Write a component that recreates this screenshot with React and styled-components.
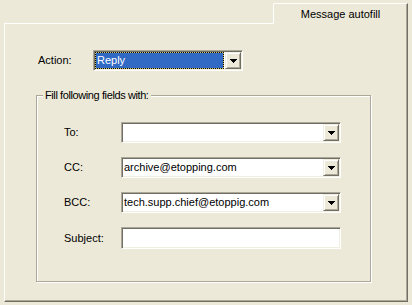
import React from "react";
import styled, { createGlobalStyle } from "styled-components";

const Global = createGlobalStyle`
  html, body { margin: 0; padding: 0; background: #ECE9D8; }
  body {
    font-family: "Liberation Sans", Arial, sans-serif;
    font-size: 11px;
    color: #000;
  }
`;

const Page = styled.div`
  width: 412px;
  height: 305px;
  box-sizing: border-box;
  padding: 3px 4px 3px 4px;
  display: flex;
  flex-direction: column;
  background: #ECE9D8;
`;

const TabRow = styled.div`
  display: flex;
  justify-content: flex-end;
  height: 20px;
`;

const Tab = styled.div`
  position: relative;
  z-index: 1;
  width: 135px;
  height: 21px;
  margin-bottom: -1px;
  box-sizing: border-box;
  background: #ECE9D8;
  border-top: 1px solid #fff;
  border-left: 1px solid #fff;
  border-right: 1px solid #716F64;
  border-top-left-radius: 2px;
  box-shadow: inset -1px 0 0 #ACA899;
  display: flex;
  justify-content: center;
  padding-top: 4px;
  line-height: 13px;
`;

const Panel = styled.div`
  flex: 1;
  box-sizing: border-box;
  border-top: 1px solid #fff;
  border-left: 1px solid #fff;
  border-right: 1px solid #716F64;
  border-bottom: 1px solid #716F64;
  box-shadow: inset -1px -1px 0 #ACA899;
  padding: 26px 0 0 31px;
`;

const Row = styled.div`
  display: flex;
  align-items: center;
  margin-left: ${(p) => p.$indent || 0}px;
`;

const Label = styled.span`
  width: ${(p) => p.$w}px;
  flex: none;
  line-height: 13px;
`;

const Sunken = styled.div`
  display: flex;
  box-sizing: border-box;
  width: ${(p) => p.$w}px;
  height: ${(p) => p.$h || 21}px;
  border: 1px solid;
  border-color: #ACA899 #fff #fff #ACA899;
  box-shadow: inset 1px 1px 0 #716F64, inset -1px -1px 0 #F1EFE2;
  background: #fff;
  padding: 1px;
`;

const FieldText = styled.div`
  flex: 1;
  line-height: 17px;
  padding-left: 1px;
  white-space: nowrap;
  overflow: hidden;
`;

const FocusWrap = styled.div`
  flex: 1;
  display: flex;
  margin: 0 1px 0 0;
  background: #D6C86A;
`;

const Selection = styled.div`
  flex: 1;
  box-sizing: border-box;
  border: 1px dotted #000;
  background: #316AC5;
  background-clip: padding-box;
  color: #fff;
  line-height: 15px;
  padding-left: 1px;
`;

const DropButton = styled.div`
  width: 16px;
  flex: none;
  box-sizing: border-box;
  background: #ECE9D8;
  border: 1px solid;
  border-color: #F1EFE2 #716F64 #716F64 #F1EFE2;
  box-shadow: inset 1px 1px 0 #fff, inset -1px -1px 0 #ACA899;
  display: flex;
  align-items: center;
  justify-content: center;
`;

const GroupBox = styled.fieldset`
  width: 335px;
  box-sizing: border-box;
  margin: 17px 0 0 0;
  padding: 20px 0 32px 0;
  border: 1px solid #ACA899;
  box-shadow: 1px 1px 0 #fff, inset 1px 1px 0 #fff;
  min-width: 0;
`;

const Legend = styled.legend`
  margin-left: 6px;
  padding: 0 2px;
  line-height: 14px;
  letter-spacing: -0.4px;
  background: #ECE9D8;
`;

const Rows = styled.div`
  display: flex;
  flex-direction: column;
  gap: 14px;
  padding-left: 27px;
`;

const Arrow = () => (
  <svg width="7" height="4" viewBox="0 0 7 4">
    <path d="M0 0h7v1h-1v1h-1v1h-1v1h-1v-1h-1v-1h-1v-1h-1z" fill="#000" />
  </svg>
);

const ComboBox = ({ w, value, selected }) => (
  <Sunken $w={w}>
    {selected ? (
      <FocusWrap>
        <Selection>{value}</Selection>
      </FocusWrap>
    ) : (
      <FieldText>{value}</FieldText>
    )}
    <DropButton>
      <Arrow />
    </DropButton>
  </Sunken>
);

export default function App() {
  return (
    <>
      <Global />
      <Page>
        <TabRow>
          <Tab>Message autofill</Tab>
        </TabRow>
        <Panel>
          <Row $indent={2}>
            <Label $w={55}>Action:</Label>
            <ComboBox w={150} value="Reply" selected />
          </Row>
          <GroupBox>
            <Legend>Fill following fields with:</Legend>
            <Rows>
              <Row>
                <Label $w={57}>To:</Label>
                <ComboBox w={220} value="" />
              </Row>
              <Row>
                <Label $w={57}>CC:</Label>
                <ComboBox w={220} value="archive@etopping.com" />
              </Row>
              <Row>
                <Label $w={57}>BCC:</Label>
                <ComboBox w={220} value="tech.supp.chief@etoppig.com" />
              </Row>
              <Row>
                <Label $w={57}>Subject:</Label>
                <Sunken $w={220} $h={22}>
                  <FieldText />
                </Sunken>
              </Row>
            </Rows>
          </GroupBox>
        </Panel>
      </Page>
    </>
  );
}
